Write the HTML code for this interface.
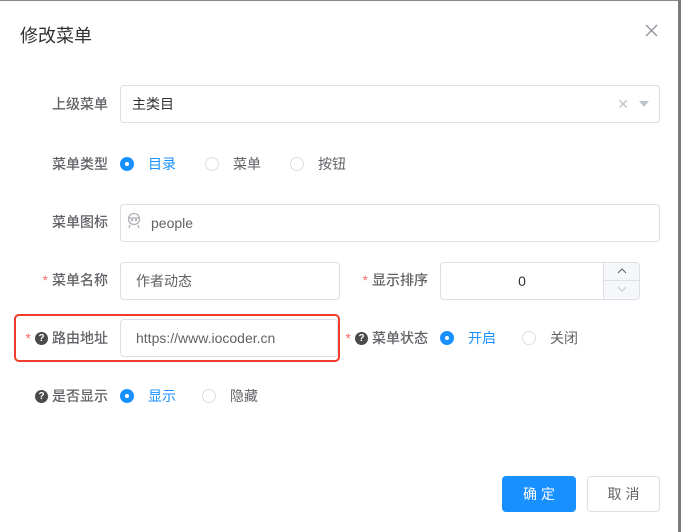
<!DOCTYPE html>
<html><head><meta charset="utf-8"><style>
*{box-sizing:border-box;margin:0;padding:0}
body{width:681px;height:532px;overflow:hidden;background:#fff;font-family:"Liberation Sans","Noto Sans CJK SC",sans-serif;font-size:14px;color:#606266;position:relative}
.edge-r{position:absolute;right:0;top:0;width:3px;height:532px;background:#7a7a7a}
.edge-t{position:absolute;left:0;top:0;width:681px;height:1px;background:#8a8a8a}
.title{position:absolute;left:20px;top:22px;font-size:18px;color:#303133}
.close{position:absolute;left:645px;top:24px;width:13px;height:13px}
.lbl{position:absolute;right:573px;height:20px;display:flex;align-items:center;justify-content:flex-end;font-weight:500;color:#606266;white-space:nowrap}
.lbl2{right:253px}
.star{color:#f56c6c;margin-right:4px}
.q{display:inline-block;width:13px;height:13px;border-radius:50%;background:#4a4a4a;color:#fff;font-size:10px;line-height:13px;text-align:center;font-weight:bold;margin-right:4px}
.inp{position:absolute;height:38px;border:1px solid #dcdfe6;border-radius:4px;line-height:36px;padding-left:15px;color:#606266}
.radio{position:absolute;height:20px;line-height:20px;white-space:nowrap}
.r{display:inline-block;width:14px;height:14px;border-radius:50%;border:1px solid #dcdfe6;vertical-align:-2px;margin-right:14px;position:relative}
.r.on{background:#1890ff;border-color:#1890ff}
.r.on:after{content:"";position:absolute;left:4px;top:4px;width:4px;height:4px;border-radius:50%;background:#fff}
.blue{color:#1890ff}
.btn{position:absolute;top:476px;height:36px;border-radius:4px;line-height:34px;text-align:center;letter-spacing:4px;text-indent:4px}
</style></head><body>
<div class="edge-t"></div><div class="edge-r"></div>
<div class="title">修改菜单</div>
<svg class="close" viewBox="0 0 13 13"><path d="M1 1L12 12M12 1L1 12" stroke="#909399" stroke-width="1.3"/></svg>

<div class="lbl" style="top:94px">上级菜单</div>
<div class="inp" style="left:120px;top:85px;width:540px;padding-left:11px;color:#303133">主类目
<span style="position:absolute;right:30px;top:0;color:#c0c4cc;font-size:14px">✕</span>
<span style="position:absolute;right:10px;top:15px;width:0;height:0;border-left:5px solid transparent;border-right:5px solid transparent;border-top:6px solid #c0c4cc"></span></div>

<div class="lbl" style="top:154px">菜单类型</div>
<div class="radio" style="left:120px;top:154px"><span class="r on"></span><span class="blue">目录</span></div>
<div class="radio" style="left:205px;top:154px"><span class="r"></span>菜单</div>
<div class="radio" style="left:290px;top:154px"><span class="r"></span>按钮</div>

<div class="lbl" style="top:212px">菜单图标</div>
<div class="inp" style="left:120px;top:204px;width:540px;padding-left:30px">people
<svg style="position:absolute;left:4px;top:7px" width="18" height="18" viewBox="0 0 18 18" fill="none" stroke="#b0b3b8" stroke-width="1.3"><circle cx="9" cy="7" r="5.5"/><path d="M3.5 6h11"/><circle cx="7" cy="8" r=".6" fill="#b0b3b8"/><circle cx="11" cy="8" r=".6" fill="#b0b3b8"/><path d="M5 13l-1 3M13 13l1 3"/></svg></div>

<div class="lbl" style="top:270px"><span class="star">*</span>菜单名称</div>
<div class="inp" style="left:120px;top:262px;width:220px">作者动态</div>
<div class="lbl lbl2" style="top:270px"><span class="star">*</span>显示排序</div>
<div class="inp" style="left:440px;top:262px;width:200px;padding:0;text-align:center;padding-right:36px;color:#303133">0
<div style="position:absolute;right:0;top:0;width:36px;height:36px;border-left:1px solid #dcdfe6;background:#f5f7fa;border-radius:0 4px 4px 0">
<div style="height:18px;border-bottom:1px solid #dcdfe6;position:relative"><svg style="position:absolute;left:13px;top:5px" width="10" height="6"><path d="M1 5L5 1L9 5" stroke="#606266" fill="none"/></svg></div>
<div style="position:relative"><svg style="position:absolute;left:13px;top:5px" width="10" height="6"><path d="M1 1L5 5L9 1" stroke="#c0c4cc" fill="none"/></svg></div>
</div></div>

<div style="position:absolute;left:14px;top:314px;width:326px;height:48px;border:2px solid #f23b2a;border-radius:5px"></div>
<div class="lbl" style="top:328px"><span class="star">*</span><span class="q">?</span>路由地址</div>
<div class="inp" style="left:120px;top:319px;width:218px">https://www.iocoder.cn</div>
<div class="lbl lbl2" style="top:328px"><span class="star">*</span><span class="q">?</span>菜单状态</div>
<div class="radio" style="left:440px;top:328px"><span class="r on"></span><span class="blue">开启</span></div>
<div class="radio" style="left:522px;top:328px"><span class="r"></span>关闭</div>

<div class="lbl" style="top:386px"><span class="q">?</span>是否显示</div>
<div class="radio" style="left:120px;top:386px"><span class="r on"></span><span class="blue">显示</span></div>
<div class="radio" style="left:202px;top:386px"><span class="r"></span>隐藏</div>

<div class="btn" style="left:502px;width:74px;background:#1890ff;border:1px solid #1890ff;color:#fff">确定</div>
<div class="btn" style="left:587px;width:73px;border:1px solid #dcdfe6;color:#606266">取消</div>
</body></html>
